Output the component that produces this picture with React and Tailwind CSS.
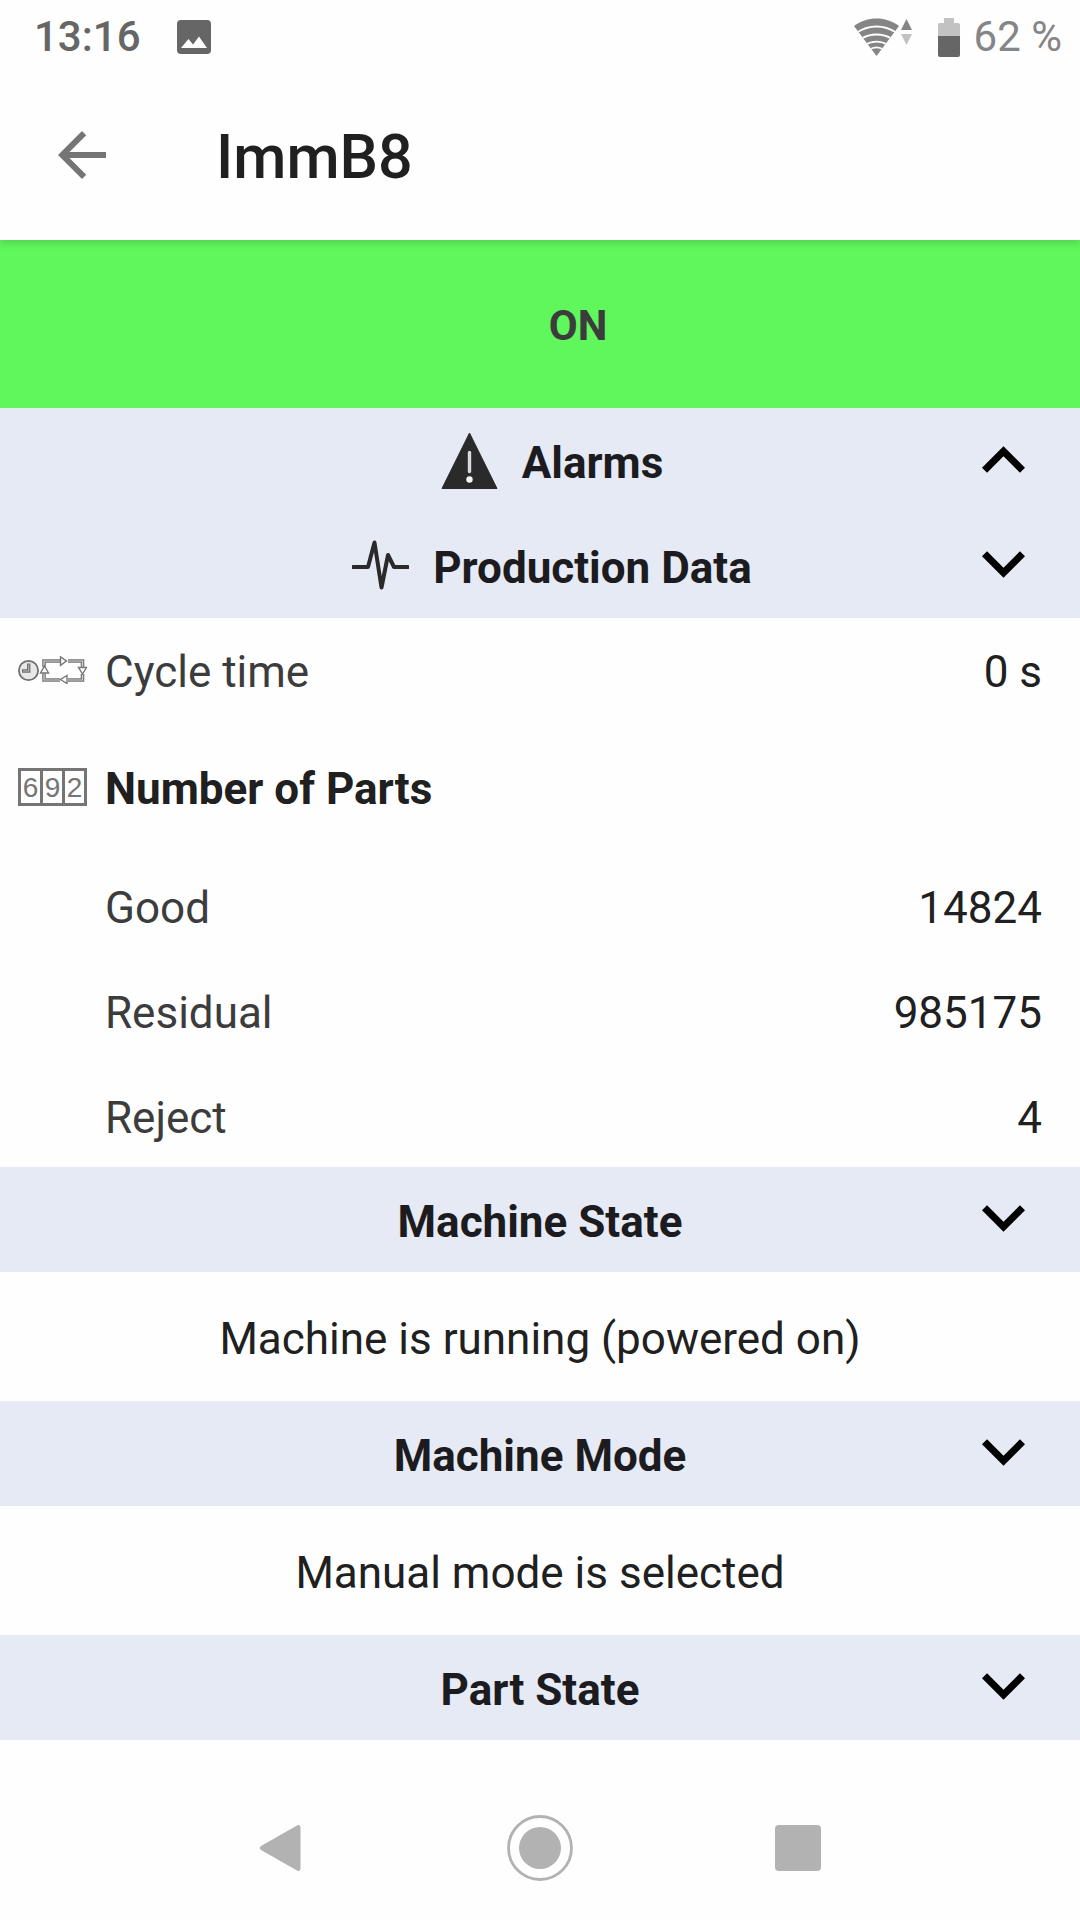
import React, { useState } from 'react';

const Chevron = ({ up }) => (
  <span className="justify-self-center pb-[2px]">
    <svg
      viewBox={up ? '6 8 12 7.41' : '6 8.59 12 7.41'}
      className="w-[43px] h-[27px] fill-black"
      aria-hidden="true"
    >
      {up ? (
        <path d="M12 8l-6 6 1.41 1.41L12 10.83l4.59 4.58L18 14z" />
      ) : (
        <path d="M16.59 8.59L12 13.17 7.41 8.59 6 10l6 6 6-6z" />
      )}
    </svg>
  </span>
);

const AlarmIcon = () => (
  <svg viewBox="0 0 57 57" className="w-[57px] h-[57px] shrink-0" aria-hidden="true">
    <path d="M28.5 1L56 56.5H1z" fill="#2a2a2a" stroke="#2a2a2a" strokeLinejoin="round" />
    <path d="M28.5 20.5v19" stroke="#d8dae0" strokeWidth="3.4" strokeLinecap="round" />
    <circle cx="28.5" cy="47.5" r="3.2" fill="#f4f5f8" />
  </svg>
);

const PulseIcon = () => (
  <svg viewBox="0 0 57 57" className="w-[57px] h-[57px] shrink-0" fill="none" aria-hidden="true">
    <path
      d="M1 30H16L22.5 5.5L29.5 50.5L36 18L42 30H56"
      stroke="#2a2a2a"
      strokeWidth="4"
      strokeLinejoin="round"
      strokeLinecap="round"
    />
  </svg>
);

const CycleIcon = () => (
  <svg viewBox="0 0 69 28" className="w-[69px] h-[28px]" fill="none" aria-hidden="true">
    <circle cx="10.5" cy="14.5" r="9.6" fill="#e8e8e8" stroke="#707070" strokeWidth="1.8" />
    <path d="M10.7 7.500v7.500H4" stroke="#707070" strokeWidth="3.4" />
    <path d="M10.7 8.500v6.500H5" stroke="#bbb" strokeWidth="1" />
    <path d="M26 11V5H42M50 5H64.500V11M64.500 18V24H50M42 24H26V17" stroke="#777" strokeWidth="3.6" />
    <path d="M26 11V5H42M50 5H64.500V11M64.500 18V24H50M42 24H26V17" stroke="#ccc" strokeWidth="1.2" />
    <g fill="#fff" stroke="#777" strokeWidth="1.4">
      <path d="M42.500 .800v8.600l6-4.300z" />
      <path d="M60.500 11.500h8l-4 6.500z" />
      <path d="M49 19.500v8l-6.500-4z" />
      <path d="M22.500 17h8l-4-7z" />
    </g>
  </svg>
);

const CounterIcon = () => (
  <span
    className="flex w-[69px] h-[38px] border-[3px] border-[#757575] divide-x-3 divide-[#757575] font-[Liberation_Sans] text-[28px] leading-[33px] font-normal text-[#757575]"
    aria-hidden="true"
  >
    <span className="flex-1 text-center">6</span>
    <span className="flex-1 text-center">9</span>
    <span className="flex-1 text-center">2</span>
  </span>
);

const SectionHeader = ({ title, icon, open, onToggle }) => (
  <h2>
    <button
      type="button"
      aria-expanded={open}
      onClick={onToggle}
      className="grid w-full h-[105px] grid-cols-[153px_1fr_153px] items-center bg-[#e6eaf4] text-[44px] leading-[50px] font-bold text-[#1c1c20]"
    >
      <span className={icon ? 'col-start-2 flex items-center justify-center gap-6 pl-6' : 'col-start-2'}>
        {icon}
        <span className="block pt-1">{title}</span>
      </span>
      <Chevron up={!open} />
    </button>
  </h2>
);

const DataRow = ({ label, value }) => (
  <div className="flex h-[105px] items-center justify-between pt-[6px] pl-[105px] pr-[38px]">
    <dt className="text-[#3c3c3c]">{label}</dt>
    <dd>{value}</dd>
  </div>
);

const StateText = ({ children }) => (
  <p className="flex h-[129px] items-center justify-center pt-1 text-center">{children}</p>
);

const StatusBar = () => (
  <div className="flex h-[72px] items-center justify-between pt-[2px] pl-[34px] pr-[18px] text-[42px] leading-[50px] font-medium text-[#666]">
    <div className="flex items-center gap-9">
      <span>13:16</span>
      <svg viewBox="0 0 34 34" className="w-[34px] h-[34px]" aria-hidden="true">
        <rect width="34" height="34" rx="4" fill="#666" />
        <path d="M4 28l7.500-9 4.500 5.500 6-8L30 28z" fill="#fff" />
      </svg>
    </div>
    <div className="flex items-center text-[#858585]">
      <svg viewBox="0 0 60 38" className="w-[60px] h-[38px]" aria-hidden="true">
        <clipPath id="wifi">
          <path d="M0 8C13-2 32-2 45 8L22.500 38z" />
        </clipPath>
        <g clipPath="url(#wifi)">
          <rect width="45" height="38" fill="#858585" />
          <g fill="none" stroke="#fff" strokeWidth="1.800">
            <path d="M3 14.500C15 6.500 30 6.500 42 14.500" />
            <path d="M7 21C16 15 29 15 38 21" />
            <path d="M11 27C18 22.500 27 22.500 34 27" />
            <path d="M15 32C20 28.500 25 28.500 30 32" />
          </g>
        </g>
        <path d="M52.500 1l5.500 11H47z" fill="#858585" />
        <path d="M52.500 27L58 16H47z" fill="#c2c2c2" />
      </svg>
      <svg viewBox="0 0 22 39" className="ml-6 w-[22px] h-[39px]" aria-hidden="true">
        <path d="M6 0h10v5h4q2 0 2 2v12H0V7q0-2 2-2h4z" fill="#c2c2c2" />
        <path d="M0 18h22v19q0 2-2 2H2q-2 0-2-2z" fill="#666" />
      </svg>
      <span className="ml-[14px] font-normal">62 %</span>
    </div>
  </div>
);

const NavBar = () => (
  <nav className="grid h-[144px] grid-cols-[258px_258px_258px] items-center justify-center justify-items-center">
    <button type="button" aria-label="Back" className="pr-1">
      <svg viewBox="0 0 42 48" className="w-[42px] h-[48px]" aria-hidden="true">
        <path d="M38 1.500L2 22Q-.500 24 2 26L38 46.500Q41.500 48 41.500 44V4Q41.500 0 38 1.500z" fill="#b2b2b2" />
      </svg>
    </button>
    <button type="button" aria-label="Home">
      <svg viewBox="0 0 66 66" className="w-[66px] h-[66px]" aria-hidden="true">
        <circle cx="33" cy="33" r="31.500" fill="none" stroke="#b2b2b2" strokeWidth="2.800" />
        <circle cx="33" cy="33" r="21" fill="#b2b2b2" />
      </svg>
    </button>
    <button type="button" aria-label="Overview" className="w-[46px] h-[46px] rounded bg-[#b2b2b2]" />
  </nav>
);

const App = () => {
  const [open, setOpen] = useState({
    alarms: false,
    production: true,
    state: true,
    mode: true,
    part: true,
  });

  const toggle = (key) => setOpen({ ...open, [key]: !open[key] });

  return (
    <div className="flex min-h-screen flex-col bg-[#fefefe] font-[Roboto,sans-serif] text-[#202020]">
      {/* Top bar */}
      <header className="relative shadow-[0_3px_8px_rgba(0,0,0,0.16)]">
        <StatusBar />
        <div className="flex h-[168px] items-center pb-[2px] pl-[46px]">
          <button type="button" aria-label="Back to machines">
            <svg viewBox="0 0 24 24" className="w-[72px] h-[72px] fill-[#757575]" aria-hidden="true">
              <path d="M20 11H7.830l5.590-5.590L12 4l-8 8 8 8 1.410-1.410L7.830 13H20v-2z" />
            </svg>
          </button>
          <h1 className="ml-[98px] pt-1 text-[61px] leading-[72px] font-medium">ImmB8</h1>
        </div>
      </header>

      <main className="flex-1 text-[44px] leading-[50px]">
        <div className="flex h-[168px] items-center justify-center bg-[#60f75c] pt-1 pl-[76px] text-[42px] font-bold text-[#3c3c3c]">
          ON
        </div>

        <SectionHeader title="Alarms" icon={<AlarmIcon />} open={open.alarms} onToggle={() => toggle('alarms')} />

        {/* Production data */}
        <SectionHeader
          title="Production Data"
          icon={<PulseIcon />}
          open={open.production}
          onToggle={() => toggle('production')}
        />
        {open.production && (
          <dl>
            <div className="flex h-[104px] items-center justify-between pl-[18px] pr-[38px]">
              <dt className="flex items-center gap-[18px] text-[#3c3c3c]">
                <CycleIcon />
                <span className="pt-1">Cycle time</span>
              </dt>
              <dd className="pt-1">0 s</dd>
            </div>
            <div className="flex h-[130px] items-center pl-[18px]">
              <dt className="flex items-center gap-[18px] font-bold">
                <CounterIcon />
                <span className="pt-1">Number of Parts</span>
              </dt>
            </div>
            <DataRow label="Good" value="14824" />
            <DataRow label="Residual" value="985175" />
            <DataRow label="Reject" value="4" />
          </dl>
        )}

        {/* Machine */}
        <SectionHeader title="Machine State" open={open.state} onToggle={() => toggle('state')} />
        {open.state && <StateText>Machine is running (powered on)</StateText>}
        <SectionHeader title="Machine Mode" open={open.mode} onToggle={() => toggle('mode')} />
        {open.mode && <StateText>Manual mode is selected</StateText>}
        <SectionHeader title="Part State" open={open.part} onToggle={() => toggle('part')} />
      </main>

      <NavBar />
    </div>
  );
};

export default App;
